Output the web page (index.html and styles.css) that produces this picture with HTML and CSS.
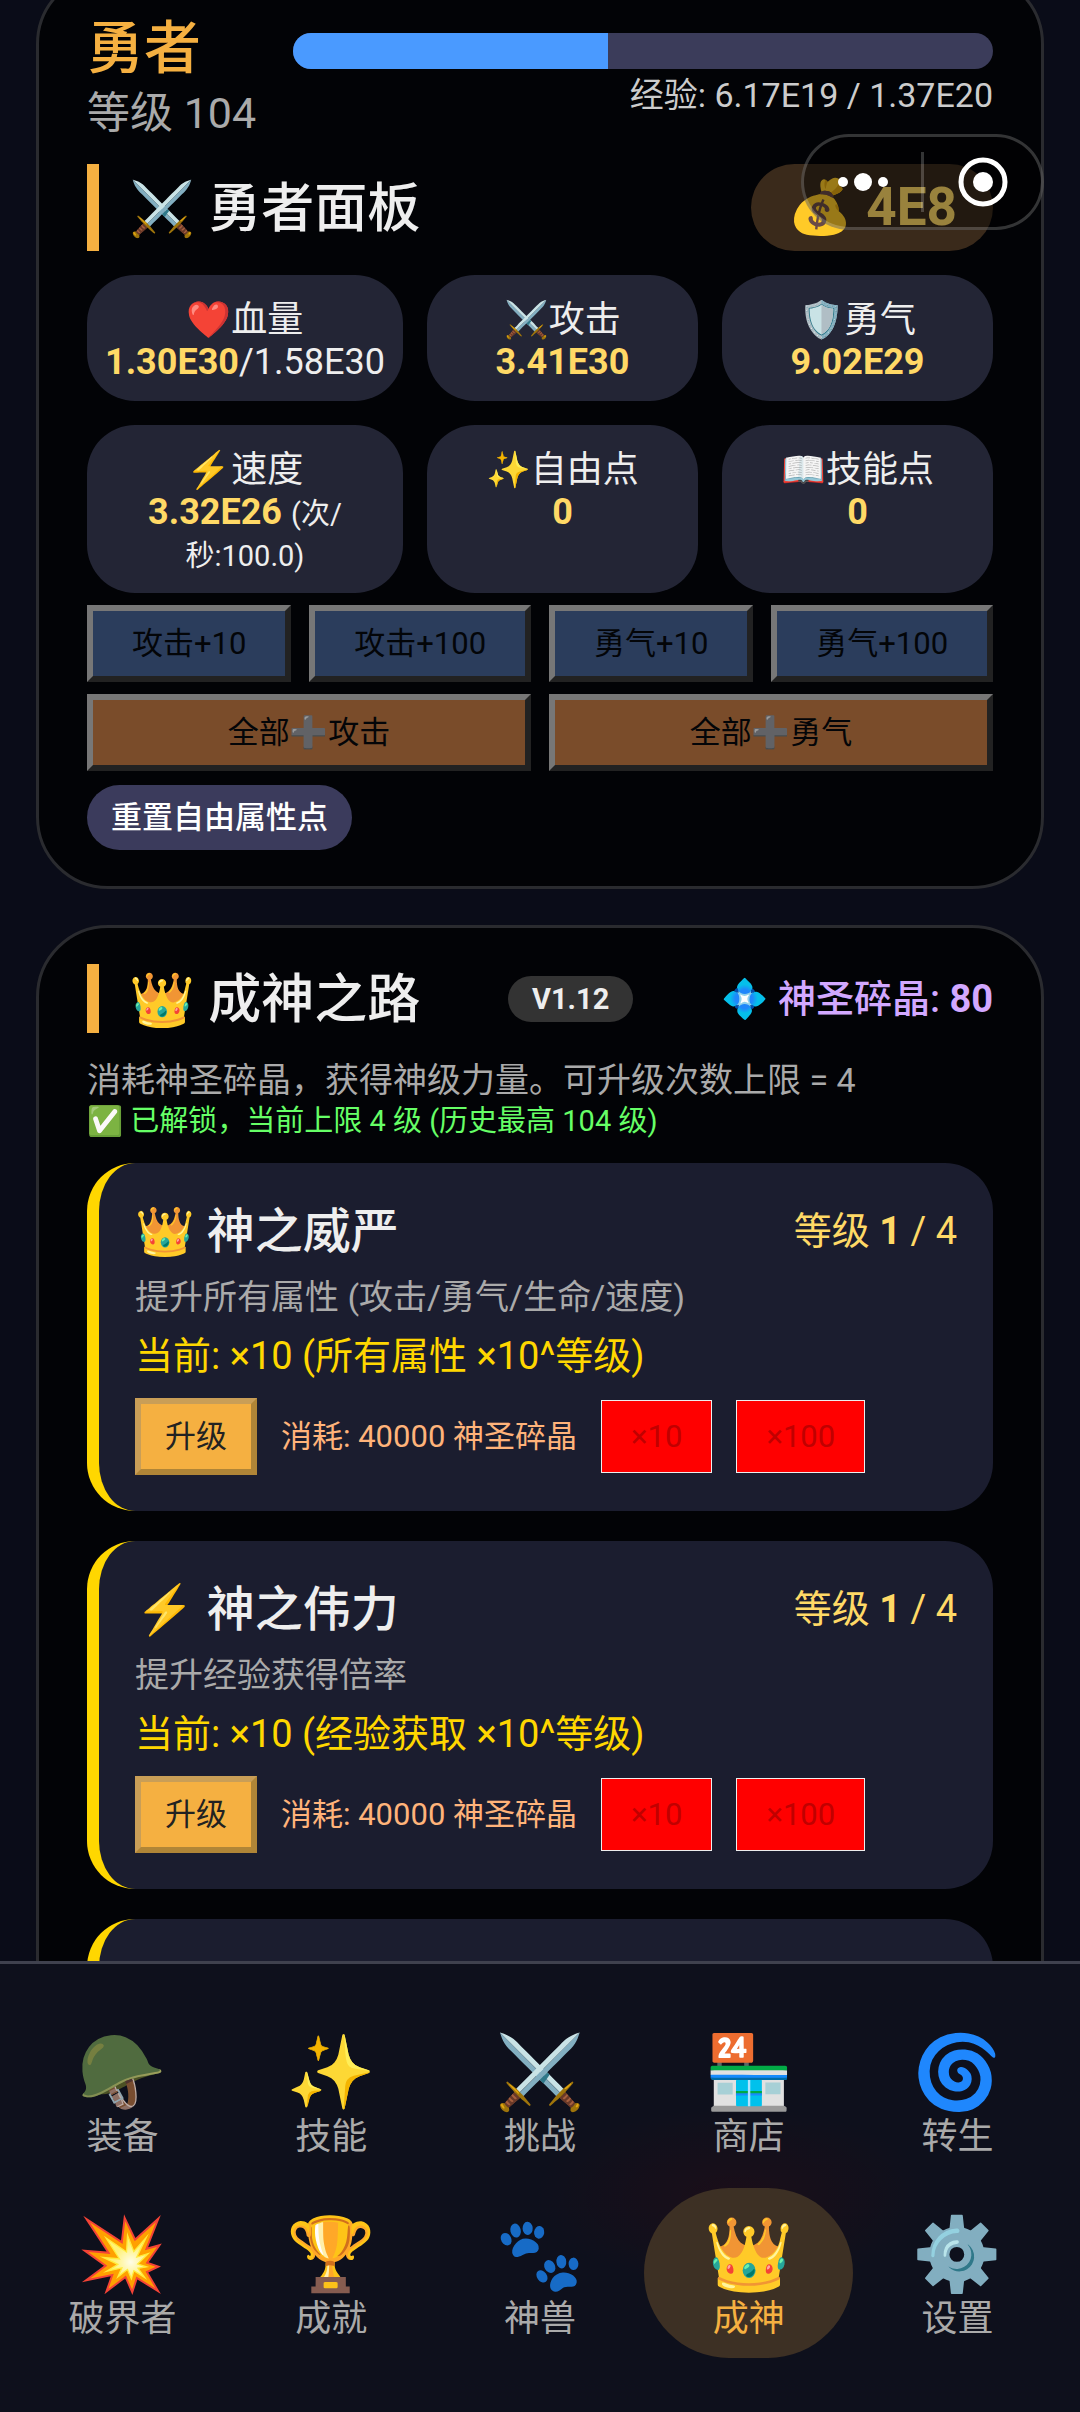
FILE: index.html
```html
<!DOCTYPE html>
<html lang="zh-CN">
<head>
  <meta charset="UTF-8">
  <title>勇者</title>
  <meta name="viewport" content="width=device-width, initial-scale=1">
  <link rel="stylesheet" href="styles.css">
</head>
<body>

  <main class="game">
    <section class="panel">
      <div class="hero">
        <div>
          <div class="hero-name">勇者</div>
          <div class="hero-level">等级 104</div>
        </div>
        <div class="exp">
          <div class="exp-bar"><div class="exp-fill" style="width: 45%"></div></div>
          <div class="exp-text">经验: 6.17E19 / 1.37E20</div>
        </div>
      </div>

      <div class="title-row">
        <h2>⚔️ 勇者面板</h2>
        <div class="gold">💰 4E8</div>
      </div>

      <div class="stats">
        <div class="stat">❤️血量<br><b>1.30E30</b>/1.58E30</div>
        <div class="stat">⚔️攻击<br><b>3.41E30</b></div>
        <div class="stat">🛡️勇气<br><b>9.02E29</b></div>
        <div class="stat">⚡速度<br><b>3.32E26</b> <small>(次/秒:100.0)</small></div>
        <div class="stat">✨自由点<br><b>0</b></div>
        <div class="stat">📖技能点<br><b>0</b></div>
      </div>

      <div class="btn-row">
        <button class="btn blue" disabled>攻击+10</button>
        <button class="btn blue" disabled>攻击+100</button>
        <button class="btn blue" disabled>勇气+10</button>
        <button class="btn blue" disabled>勇气+100</button>
      </div>
      <div class="btn-row">
        <button class="btn orange" disabled>全部➕攻击</button>
        <button class="btn orange" disabled>全部➕勇气</button>
      </div>
      <button class="reset">重置自由属性点</button>
    </section>

    <section class="panel">
      <div class="title-row god-title">
        <h2>👑 成神之路</h2>
        <span class="version">V1.12</span>
        <span class="shards">💠 神圣碎晶: <b>80</b></span>
      </div>
      <p class="tip">消耗神圣碎晶，获得神级力量。可升级次数上限 = 4</p>
      <p class="unlocked">✅ 已解锁，当前上限 4 级 (历史最高 104 级)</p>

      <article class="skill">
        <div class="skill-head">
          <h3>👑 神之威严</h3>
          <span class="skill-level">等级 <b>1</b> / 4</span>
        </div>
        <p class="skill-desc">提升所有属性 (攻击/勇气/生命/速度)</p>
        <p class="skill-now">当前: ×10 (所有属性 ×10^等级)</p>
        <div class="skill-actions">
          <button class="btn upgrade">升级</button>
          <span class="cost">消耗: 40000 神圣碎晶</span>
          <button class="multi" disabled>×10</button>
          <button class="multi" disabled>×100</button>
        </div>
      </article>

      <article class="skill">
        <div class="skill-head">
          <h3>⚡ 神之伟力</h3>
          <span class="skill-level">等级 <b>1</b> / 4</span>
        </div>
        <p class="skill-desc">提升经验获得倍率</p>
        <p class="skill-now">当前: ×10 (经验获取 ×10^等级)</p>
        <div class="skill-actions">
          <button class="btn upgrade">升级</button>
          <span class="cost">消耗: 40000 神圣碎晶</span>
          <button class="multi" disabled>×10</button>
          <button class="multi" disabled>×100</button>
        </div>
      </article>

      <article class="skill"></article>
    </section>
  </main>

  <!-- 小程序胶囊按钮 -->
  <div class="capsule">
    <button class="capsule-btn" aria-label="更多">
      <svg width="50" height="20" viewBox="0 0 50 20"><circle cx="5" cy="10" r="5"/><circle cx="25" cy="10" r="9"/><circle cx="45" cy="10" r="5"/></svg>
    </button>
    <button class="capsule-btn" aria-label="关闭">
      <svg width="50" height="50" viewBox="0 0 50 50"><circle class="ring" cx="25" cy="25" r="22"/><circle cx="25" cy="25" r="10"/></svg>
    </button>
  </div>

  <nav class="nav">
    <a href="#"><span class="icon">🪖</span>装备</a>
    <a href="#"><span class="icon">✨</span>技能</a>
    <a href="#"><span class="icon">⚔️</span>挑战</a>
    <a href="#"><span class="icon">🏪</span>商店</a>
    <a href="#"><span class="icon">🌀</span>转生</a>
    <a href="#"><span class="icon">💥</span>破界者</a>
    <a href="#"><span class="icon">🏆</span>成就</a>
    <a href="#"><span class="icon">🐾</span>神兽</a>
    <a href="#" class="active"><span class="icon">👑</span>成神</a>
    <a href="#"><span class="icon">⚙️</span>设置</a>
  </nav>

</body>
</html>
```
FILE: styles.css
```css
* {
  box-sizing: border-box;
}

body {
  margin: 0;
  height: 100vh;
  overflow: hidden;
  background: #0a0c18;
  color: #eee;
  font-family: Roboto, "Noto Sans CJK SC", "Noto Color Emoji", sans-serif;
  font-size: 36px;
  line-height: 42px;
}

h2, h3, p {
  margin: 0;
}

button {
  font-family: inherit;
  font-size: 31px;
  line-height: 41px;
}

/* the list is scrolled a little, so the first panel starts above the edge */
.game {
  padding: 0 36px;
  margin-top: -28px;
}

.panel {
  padding: 36px 48px;
  margin-bottom: 36px;
  background: #020306;
  border: 3px solid #2a2b2f;
  border-radius: 72px;
}

.hero {
  display: flex;
  align-items: center;
  justify-content: space-between;
  margin-bottom: 25px;
}

.hero-name {
  font-size: 57px;
  font-weight: 500;
  line-height: 76px;
  color: #f5b041;
}

.hero-level {
  font-size: 43px;
  line-height: 52px;
  color: #aaa;
}

.exp {
  width: 700px;
}

.exp-bar {
  height: 36px;
  margin-bottom: 4px;
  overflow: hidden;
  background: #3b3c5a;
  border-radius: 18px;
}

.exp-fill {
  height: 100%;
  background: #4a9aff;
}

.exp-text {
  font-size: 34px;
  line-height: 44px;
  color: #ccc;
  text-align: right;
}

.title-row {
  display: flex;
  justify-content: space-between;
  margin-bottom: 24px;
}

h2 {
  display: flex;
  align-items: center;
  padding: 3px 0 0 30px;
  border-left: 12px solid #f5b041;
  font-size: 53px;
  font-weight: 500;
  line-height: 66px;
}

.gold {
  padding: 12px 36px;
  background: #3a2a1b;
  border-radius: 44px;
  color: #ffd966;
  font-size: 53px;
  font-weight: bold;
  line-height: 63px;
}

.stats {
  display: grid;
  grid-template-columns: repeat(3, 1fr);
  gap: 24px;
}

.stat {
  padding: 24px 18px 18px;
  background: #232535;
  border-radius: 48px;
  text-align: center;
}

.stat b {
  color: #ffd966;
}

.stat small {
  font-size: 29px;
  line-height: 29px;
}

.btn-row {
  display: flex;
  gap: 18px;
  margin-top: 12px;
}

.btn {
  padding: 12px 24px;
  border: 6px solid;
}

.btn-row .btn {
  flex: 1 1 auto;
  border-color: #777 #222 #222 #777;
  color: #030508;
}

.blue {
  background: #2b3d5c;
}

.orange {
  background: #7a4c2a;
}

.reset {
  display: block;
  margin-top: 14px;
  padding: 12px 24px;
  background: #3b3b5c;
  border: 0;
  border-radius: 33px;
  color: #fff;
  font-weight: 500;
}

.god-title {
  align-items: center;
}

.version {
  padding: 6px 24px;
  background: #333;
  border-radius: 23px;
  font-size: 29px;
  font-weight: bold;
  line-height: 34px;
}

.shards {
  color: #d2a8ff;
  font-size: 38px;
  font-weight: 500;
}

.tip {
  color: #aaa;
  font-size: 34px;
  line-height: 46px;
}

.unlocked {
  margin-bottom: 24px;
  color: #6f6;
  font-size: 29px;
  line-height: 36px;
}

.skill {
  min-height: 348px;
  margin-bottom: 30px;
  padding: 36px;
  background: #1b1d2f;
  border-left: 12px solid #ffd700;
  border-radius: 48px;
}

.skill-head {
  display: flex;
  align-items: center;
  justify-content: space-between;
}

h3 {
  padding-top: 3px;
  font-size: 48px;
  font-weight: 500;
  line-height: 60px;
}

.skill-level {
  color: #ffd966;
  font-size: 38px;
}

.skill-desc {
  margin-top: 12px;
  color: #aaa;
  font-size: 34px;
  line-height: 46px;
}

.skill-now {
  margin: 12px 0 18px;
  color: #ffd700;
  font-size: 38px;
  line-height: 48px;
}

.skill-actions {
  display: flex;
  align-items: center;
  gap: 24px;
}

.upgrade {
  background: #f5b041;
  border-color: #c99e57 #b08537 #b08537 #c99e57;
  color: #222;
}

.cost {
  color: #ffb37a;
  font-size: 31px;
}

.multi {
  padding: 15px 29px;
  background: #f00;
  border: 1px solid #eee;
  color: #c00000;
}

.capsule {
  position: fixed;
  top: 134px;
  right: 36px;
  display: flex;
  align-items: center;
  width: 243px;
  height: 96px;
  background: rgba(0, 0, 0, 0.4);
  border: 3px solid rgba(255, 255, 255, 0.2);
  border-radius: 48px;
}

.capsule-btn {
  display: flex;
  flex: 1;
  align-items: center;
  justify-content: center;
  height: 60px;
  padding: 0;
  background: none;
  border: 0;
}

.capsule-btn + .capsule-btn {
  border-left: 3px solid rgba(255, 255, 255, 0.2);
}

.capsule svg {
  fill: #fff;
}

.capsule .ring {
  fill: none;
  stroke: #fff;
  stroke-width: 5;
}

.nav {
  position: fixed;
  right: 0;
  bottom: 0;
  left: 0;
  display: grid;
  grid-template-columns: repeat(5, 1fr);
  gap: 12px 0;
  padding: 42px 18px 54px;
  background: radial-gradient(ellipse 200px 90px at 68% 52%, rgba(120, 0, 0, 0.12), transparent) #0e101c;
  border-top: 3px solid #3f414e;
}

.nav a {
  display: flex;
  flex-direction: column;
  align-items: center;
  gap: 3px;
  padding: 27px 0 18px;
  border-radius: 85px;
  color: #aaa;
  text-decoration: none;
}

.nav .icon {
  font-size: 72px;
  line-height: 80px;
}

.nav .active {
  background: #3d3024;
  color: #f5b041;
}
```
